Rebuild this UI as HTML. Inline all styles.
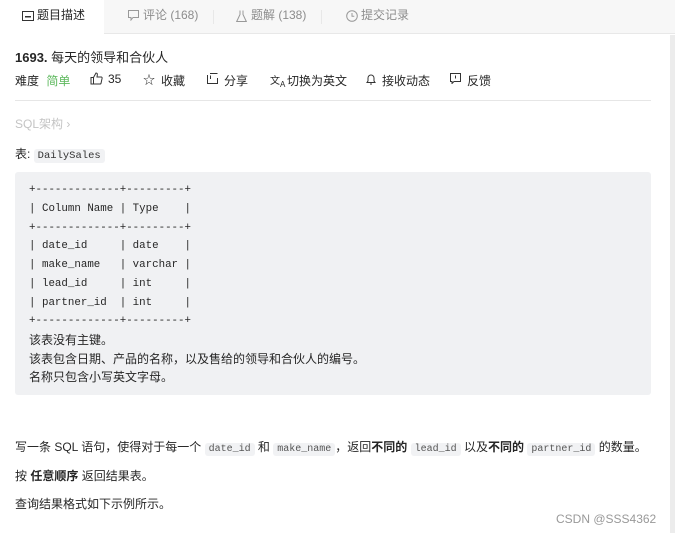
<!DOCTYPE html><html><head><meta charset="utf-8"><style>
*{margin:0;padding:0;box-sizing:border-box}
body{width:675px;height:533px;background:#fff;font-family:"Liberation Sans","Noto Sans CJK SC",sans-serif;color:#262626;position:relative;overflow:hidden;font-size:12px}
.tabs{position:absolute;left:0;top:0;width:675px;height:34px;background:#f7f7f7;border-bottom:1px solid #e8e8e8}
.tab{position:absolute;top:0;height:34px;line-height:31px;font-size:12px;color:#8c8c8c}
.act{left:0;width:104px;background:#fff;color:#262626;height:35px;padding-left:22px}
.sep{position:absolute;top:10px;width:1px;height:14px;background:#e8e8e8}
.sb{position:absolute;left:670px;top:35px;width:5px;height:498px;background:#ececec}
.abs{position:absolute;white-space:nowrap}
.code{font-family:"Liberation Mono",monospace;font-size:10px;background:#f1f2f4;border-radius:3px;padding:1px 4px;color:#555}
.box{position:absolute;left:15px;top:172px;width:636px;height:223px;background:#f0f1f3;border-radius:3px}
pre{position:absolute;left:29px;top:181px;font-family:"Liberation Mono",monospace;font-size:10.8px;line-height:18.75px;color:#262626}
.cn{position:absolute;left:29px;font-size:12px;line-height:18.5px}
</style></head><body>
<div class="tabs">
<div class="tab act"><svg width="12" height="10" style="position:absolute;left:22px;top:11px" viewBox="0 0 12 10"><rect x="0.5" y="0.5" width="11" height="9" fill="none" stroke="#333"/><rect x="3" y="5" width="6" height="1.5" fill="#333"/></svg><span style="margin-left:15px">题目描述</span></div>
<div class="tab" style="left:128px"><svg width="11" height="11" style="position:absolute;left:0;top:10px" viewBox="0 0 11 11"><path d="M.5.5h10v7H5L3 10V7.5H.5z" fill="none" stroke="#999"/></svg><span style="margin-left:15px">评论 (168)</span></div>
<div class="sep" style="left:213px"></div>
<div class="tab" style="left:236px"><svg width="11" height="12" style="position:absolute;left:0;top:10px" viewBox="0 0 11 12"><path d="M4 .5v4L.7 11.5h9.6L7 4.5v-4" fill="none" stroke="#999"/></svg><span style="margin-left:15px">题解 (138)</span></div>
<div class="sep" style="left:321px"></div>
<div class="tab" style="left:346px"><svg width="12" height="12" style="position:absolute;left:0;top:10px" viewBox="0 0 12 12"><circle cx="6" cy="6" r="5.3" fill="none" stroke="#999"/><path d="M6 3v3.3h2.3" fill="none" stroke="#999"/></svg><span style="margin-left:15px">提交记录</span></div>
</div>
<div class="sb"></div>
<div class="abs" style="left:15px;top:47px;font-size:13px;color:#262626"><b style="font-weight:600">1693.</b> 每天的领导和合伙人</div>
<div class="abs" style="left:15px;top:72px;font-size:12px;color:#262626">难度 <span style="color:#5cb85c;margin-left:4px">简单</span></div>
<div class="abs" style="left:90px;top:72px;width:14px;height:14px"><svg width="13" height="13" viewBox="0 0 13 13"><path d="M1 5.5h2.5v6.5H1zM3.5 5.5L6 1c1.3 0 1.5 1 1.3 2L7 5h4.2c.7 0 1 .6.9 1.2l-1 4.8c-.1.6-.5 1-1.1 1H3.5" fill="none" stroke="#333"/></svg></div>
<div class="abs" style="left:108px;top:72px">35</div>
<div class="abs" style="left:143px;top:71px;font-size:12px">☆</div>
<div class="abs" style="left:161px;top:72px">收藏</div>
<div class="abs" style="left:207px;top:73px"><svg width="11" height="11" viewBox="0 0 11 11"><path d="M.5 2v8.5h10V5M3 .5h7.5" fill="none" stroke="#333"/><path d="M3.5 6V2.5" stroke="#333"/></svg></div>
<div class="abs" style="left:224px;top:72px">分享</div>
<div class="abs" style="left:270px;top:72px;font-size:10px">文<sub style="font-size:8px">A</sub></div>
<div class="abs" style="left:287px;top:72px">切换为英文</div>
<div class="abs" style="left:366px;top:73px"><svg width="10" height="12" viewBox="0 0 10 12"><path d="M2 8V5a3 3 0 016 0v3l1 1.5H1zM4 11h2" fill="none" stroke="#333"/></svg></div>
<div class="abs" style="left:382px;top:72px">接收动态</div>
<div class="abs" style="left:450px;top:73px"><svg width="11" height="11" viewBox="0 0 11 11"><path d="M.5.5h10v8H4L2 10.5V8.5H.5z" fill="none" stroke="#333"/><path d="M5.5 2.5v3" stroke="#333"/></svg></div>
<div class="abs" style="left:467px;top:72px">反馈</div>
<div class="abs" style="left:15px;top:100px;width:636px;height:1px;background:#e6e6e6"></div>
<div class="abs" style="left:15px;top:115px;color:#c4c4c4">SQL架构 ›</div>
<div class="abs" style="left:15px;top:145px">表: <span class="code" style="font-size:10.5px;color:#333">DailySales</span></div>
<div class="box"></div>
<pre>+-------------+---------+
| Column Name | Type    |
+-------------+---------+
| date_id     | date    |
| make_name   | varchar |
| lead_id     | int     |
| partner_id  | int     |
+-------------+---------+</pre>
<div class="cn" style="top:331px">该表没有主键。</div>
<div class="cn" style="top:349.5px">该表包含日期、产品的名称，以及售给的领导和合伙人的编号。</div>
<div class="cn" style="top:368px">名称只包含小写英文字母。</div>
<div class="abs" style="left:15px;top:438px">写一条 SQL 语句，使得对于每一个 <span class="code">date_id</span> 和 <span class="code">make_name</span>，返回<b>不同的</b> <span class="code">lead_id</span> 以及<b>不同的</b> <span class="code">partner_id</span> 的数量。</div>
<div class="abs" style="left:15px;top:467px">按 <b>任意顺序</b> 返回结果表。</div>
<div class="abs" style="left:15px;top:495px">查询结果格式如下示例所示。</div>
<div class="abs" style="left:556px;top:512px;color:#999;font-size:12px">CSDN @SSS4362</div>
</body></html>
